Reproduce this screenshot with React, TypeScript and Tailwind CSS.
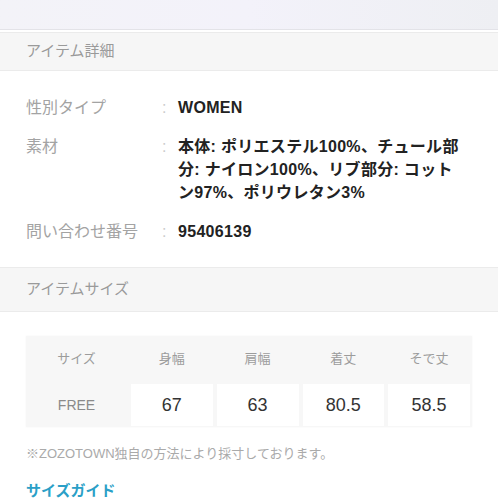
import React from 'react'

const font = "font-['Liberation_Sans','Noto_Sans_CJK_JP',sans-serif]"

const details = [
  { id: 'gender', label: '性別タイプ', lines: ['WOMEN'] },
  {
    id: 'material',
    label: '素材',
    lines: ['本体: ポリエステル100%、チュール部', '分: ナイロン100%、リブ部分: コット', 'ン97%、ポリウレタン3%']
  },
  { id: 'contact', label: '問い合わせ番号', lines: ['95406139'] }
]

const sizeHeaders = ['身幅', '肩幅', '着丈', 'そで丈']
const sizeValues = ['67', '63', '80.5', '58.5']

const SectionHeader = ({ title, height }: { title: string; height: string }) => (
  <div className={`${height} flex items-center bg-[#f6f6f6] border-y border-[#ebebeb] pl-[26px]`}>
    <span className="text-[15px] text-[#9a9a9a]">{title}</span>
  </div>
)

const App = () => {
  return (
    <div className={`w-[498px] h-[498px] overflow-hidden bg-white ${font}`}>
      <div className="h-[30px] bg-gradient-to-r from-[#f3f3f8] via-[#f3f2fa] to-[#eeeff3] border-b border-[#e3e3e8]" />
      <div className="h-[2px]" />
      <SectionHeader title="アイテム詳細" height="h-[39px]" />

      <div className="flex flex-col gap-[16px] pt-[25px] pb-[24px]">
        {details.map(row => (
          <div key={row.id} className="flex text-[16px] leading-[23px]">
            <div className="w-[162px] pl-[26px] shrink-0 text-[#a3a3a3]">{row.label}</div>
            <div className="w-[16px] shrink-0 text-[#cccccc]">:</div>
            <div className="flex-1 font-bold text-[#222] tracking-[0.3px]">
              {row.lines.map(line => (
                <div key={line} className="whitespace-nowrap">{line}</div>
              ))}
            </div>
          </div>
        ))}
      </div>

      <SectionHeader title="アイテムサイズ" height="h-[45px]" />

      <div className="px-[26px] pt-[24px]">
        <div className="grid grid-cols-[101px_1fr_1fr_1fr_1fr] gap-x-[4px] bg-[#f7f7f7] pr-[2px] pb-[1px] shadow-[0_0_2px_rgba(0,0,0,0.04)]">
          <div className="h-[46px] flex items-center justify-center text-[13px] text-[#9c9c9c]">サイズ</div>
          {sizeHeaders.map(h => (
            <div key={h} className="h-[46px] flex items-center justify-center text-[13px] text-[#9c9c9c]">
              {h}
            </div>
          ))}
          <div className="mt-[2px] h-[42px] flex items-center justify-center text-[14px] text-[#8a8a8a]">FREE</div>
          {sizeValues.map((v, i) => (
            <div key={i} className="mt-[2px] h-[42px] flex items-center justify-center bg-white text-[18px] text-[#333]">
              {v}
            </div>
          ))}
        </div>
      </div>

      <p className="pl-[26px] pt-[17px] text-[13px] leading-[20px] text-[#aaaaaa]">
        ※ZOZOTOWN独自の方法により採寸しております。
      </p>

      <p className="pl-[26px] pt-[17px] text-[15px] leading-[20px] font-bold text-[#2b9fc7]">サイズガイド</p>
    </div>
  )
}

export default App
